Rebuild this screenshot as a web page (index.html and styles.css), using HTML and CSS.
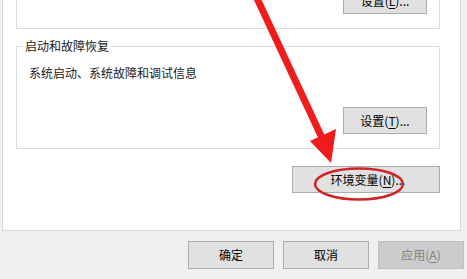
FILE: index.html
```html
<!DOCTYPE html>
<html lang="zh-CN">
<head>
<meta charset="utf-8">
<link rel="stylesheet" href="styles.css">
</head>
<body>
<div class="page">
  <div class="panel">
    <div class="group group-top">
      <div class="group-actions">
        <button class="btn btn-small">设置(<u>L</u>)...</button>
      </div>
    </div>
    <div class="group group-startup">
      <span class="legend">启动和故障恢复</span>
      <p class="desc">系统启动、系统故障和调试信息</p>
      <div class="group-actions">
        <button class="btn btn-small">设置(<u>T</u>)...</button>
      </div>
    </div>
    <div class="env-row">
      <button class="btn btn-env">环境变量(<u>N</u>)...</button>
    </div>
  </div>
  <div class="dialog-buttons">
    <button class="btn btn-dialog">确定</button>
    <button class="btn btn-dialog">取消</button>
    <button class="btn btn-dialog btn-disabled">应用(<u>A</u>)</button>
  </div>
  <svg class="annotation" width="467" height="279" viewBox="0 0 467 279">
    <line x1="255" y1="-6" x2="323" y2="140" stroke="#f01c1c" stroke-width="7" stroke-linecap="butt"/>
    <polygon points="331,163 310,141 336,129" fill="#f01c1c"/>
    <ellipse cx="359" cy="184" rx="44" ry="15.5" fill="none" stroke="#cf2326" stroke-width="2.5"/>
  </svg>
</div>
</body>
</html>
```
FILE: styles.css
```css
* { box-sizing: border-box; }
html, body {
  margin: 0;
  padding: 0;
  background: #f0f0f0;
  width: 467px;
  height: 279px;
  overflow: hidden;
}
body {
  font-family: "Noto Sans CJK SC", "Noto Sans", sans-serif;
  font-size: 12px;
  color: #000;
}
.page {
  position: relative;
  display: flow-root;
  width: 467px;
  height: 279px;
}
.panel {
  display: flow-root;
  margin-left: 2px;
  width: 459px;
  background: #fff;
  border: 1px solid #d9d9d9;
  border-top: none;
  padding: 0 20px 37px 13px;
}
.group {
  border: 1px solid #dcdcdc;
  width: 424px;
}
.group-top {
  height: 69px;
  margin-top: -40px;
  padding: 26px 12px 0 0;
}
.group-actions {
  display: flex;
  justify-content: flex-end;
}
.group-startup {
  margin-top: 17px;
  padding: 0 12px 14px 6px;
}
.legend {
  display: block;
  width: fit-content;
  margin-top: -9px;
  padding: 0 2px;
  background: #fff;
  line-height: 16px;
  color: #1a1a1a;
}
.desc {
  margin: 11px 0 0 6px;
  line-height: 16px;
  color: #1a1a1a;
}
.group-startup .group-actions {
  margin-top: 26px;
}
.btn {
  font-family: inherit;
  font-size: 12px;
  color: #000;
  background: #e1e1e1;
  border: 1px solid #adadad;
  border-radius: 0;
  padding: 0;
  margin: 0;
  line-height: 16px;
  display: flex;
  align-items: center;
  justify-content: center;
}
.btn u { text-decoration: underline; text-underline-offset: 2px; }
.btn-small {
  width: 84px;
  height: 27px;
}
.env-row {
  display: flex;
  justify-content: flex-end;
  width: 424px;
  margin-top: 17px;
}
.btn-env {
  width: 148px;
  height: 27px;
  padding-left: 4px;
}
.dialog-buttons {
  display: flex;
  justify-content: flex-end;
  gap: 9px;
  margin-top: 10px;
  padding-right: 3px;
}
.btn-dialog {
  width: 86px;
  height: 28px;
}
.btn-disabled {
  background: #cccccc;
  border-color: #bfbfbf;
  color: #838383;
}
.annotation {
  position: absolute;
  left: 0;
  top: 0;
  pointer-events: none;
}
```
